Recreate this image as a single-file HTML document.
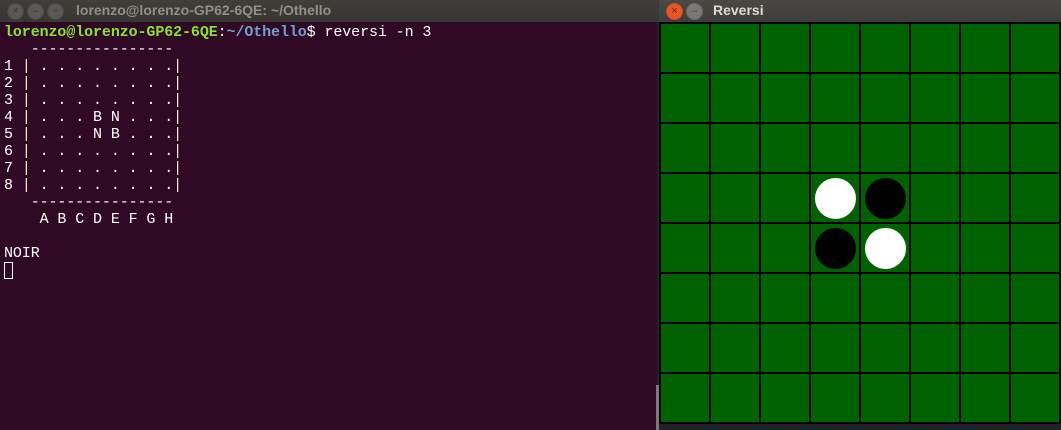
<!DOCTYPE html>
<html><head><style>
*{margin:0;padding:0;box-sizing:border-box}
body{width:1061px;height:430px;overflow:hidden;background:#1f2227;position:relative;font-family:"Liberation Sans",sans-serif}
#tt{position:absolute;left:0;top:0;width:659px;height:22px;background:linear-gradient(#3f3e3a,#373632)}
.b{position:absolute;top:3px;width:17px;height:17px;border-radius:50%;background:#5a5955;border:1px solid #4a4945;color:#3a3935;font-size:11px;line-height:15px;text-align:center}
#tt .t{position:absolute;left:76px;top:2px;font-size:14px;color:#8f8e89;font-weight:bold}
#term{position:absolute;left:0;top:22px;width:657px;height:408px;background:#300a24}
pre{position:absolute;left:4px;top:24px;font-family:"Liberation Mono",monospace;font-size:15px;line-height:17px;color:#fff;letter-spacing:-0.1px}
.g{color:#8ae234;font-weight:bold}.bl{color:#729fcf;font-weight:bold}.y{color:#f4f0c8}
#cur{position:absolute;left:4px;top:262px;width:9px;height:17px;border:1px solid #fff}
#sb{position:absolute;left:656px;top:385px;width:3px;height:45px;background:#7a7a7a}
#rt{position:absolute;left:659px;top:0;width:402px;height:22px;background:linear-gradient(#4a4945,#3e3d39)}
#rt .t{position:absolute;left:54px;top:2px;font-size:14px;color:#dfdbd2;font-weight:bold}
#board{position:absolute;left:659px;top:22px;width:402px;height:402px;background:#000}
.c{position:absolute;width:48px;height:48px;background:#006200}
.p{position:absolute;width:41px;height:41px;border-radius:50%}
</style></head><body>
<div id="tt">
<div class="b" style="left:7px">×</div><div class="b" style="left:27px">–</div><div class="b" style="left:47px">▫</div>
<div class="t">lorenzo@lorenzo-GP62-6QE: ~/Othello</div></div>
<div id="term">
</div>
<pre><span class="g">lorenzo@lorenzo-GP62-6QE</span>:<span class="bl">~/Othello</span>$ reversi -n 3
   ----------------
1 <span class="y">|</span> . . . . . . . .<span class="y">|</span>
2 <span class="y">|</span> . . . . . . . .<span class="y">|</span>
3 <span class="y">|</span> . . . . . . . .<span class="y">|</span>
4 <span class="y">|</span> . . . B N . . .<span class="y">|</span>
5 <span class="y">|</span> . . . N B . . .<span class="y">|</span>
6 <span class="y">|</span> . . . . . . . .<span class="y">|</span>
7 <span class="y">|</span> . . . . . . . .<span class="y">|</span>
8 <span class="y">|</span> . . . . . . . .<span class="y">|</span>
   ----------------
    A B C D E F G H

NOIR</pre>
<div id="cur"></div>
<div id="sb"></div>
<div id="rt">
<div class="b" style="left:7px;background:#e8572a;border-color:#c94a22;color:#6a2a10">×</div>
<div class="b" style="left:27px;background:#7a7975;border-color:#6a6965;color:#4a4945">–</div>
<div class="t">Reversi</div></div>
<div id="board">
<script>
for(let r=0;r<8;r++)for(let c=0;c<8;c++)document.write('<div class="c" style="left:'+(2+c*50)+'px;top:'+(2+r*50)+'px"></div>');
const P=[[3,3,'#fff'],[4,3,'#000'],[3,4,'#000'],[4,4,'#fff']];
for(const [c,r,col] of P)document.write('<div class="p" style="left:'+(2+c*50+4)+'px;top:'+(2+r*50+4)+'px;background:'+col+'"></div>');
</script>
</div>
</body></html>
